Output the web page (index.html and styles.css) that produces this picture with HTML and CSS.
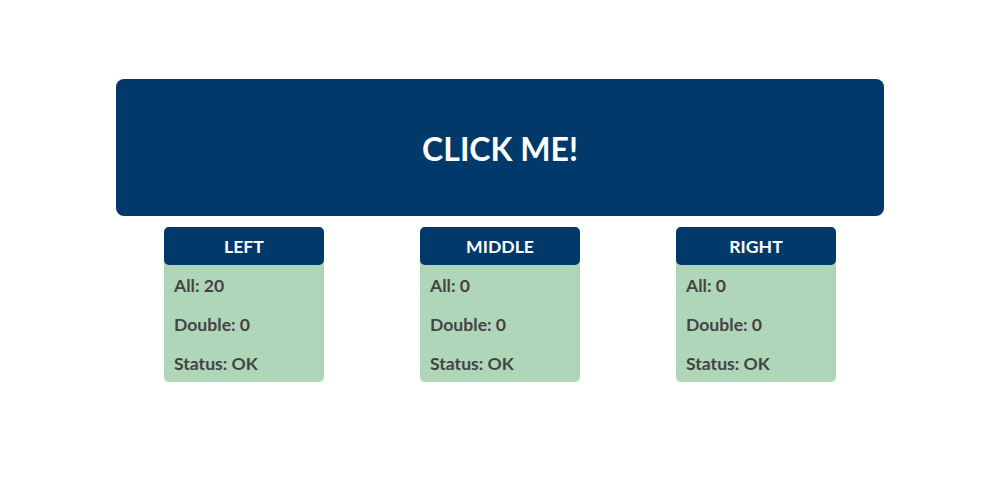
FILE: index.html
```html
<!DOCTYPE html>
<html lang="en">
<head>
    <meta charset="UTF-8">
    <title>Click Counter</title>
    <link rel="stylesheet" href="styles.css">
</head>
<body>
    <main class="wrap">
        <button class="big-btn" id="btn">CLICK ME!</button>

        <section class="panels">
            <div class="panel">
                <div class="panel-head">LEFT</div>
                <div class="panel-body">
                    <div class="row">All: 20</div>
                    <div class="row">Double: 0</div>
                    <div class="row">Status: OK</div>
                </div>
            </div>

            <div class="panel">
                <div class="panel-head">MIDDLE</div>
                <div class="panel-body">
                    <div class="row">All: 0</div>
                    <div class="row">Double: 0</div>
                    <div class="row">Status: OK</div>
                </div>
            </div>

            <div class="panel">
                <div class="panel-head">RIGHT</div>
                <div class="panel-body">
                    <div class="row">All: 0</div>
                    <div class="row">Double: 0</div>
                    <div class="row">Status: OK</div>
                </div>
            </div>
        </section>
    </main>
</body>
</html>
```

FILE: styles.css
```css
body {
    margin: 0;
    padding: 0;
    background: #fff;
    font-family: 'Lato', 'Liberation Sans', sans-serif;
    color: #444;
}

.wrap {
    width: 768px;
    padding: 79px 0 0 116px;
}

.big-btn {
    display: block;
    width: 768px;
    height: 137px;
    border: none;
    border-radius: 8px;
    background: #01396b;
    color: #fff;
    font-family: inherit;
    font-weight: 700;
    font-size: 32px;
    line-height: 1;
    padding: 2px 0 0;
    cursor: pointer;
}

.panels {
    display: grid;
    grid-template-columns: repeat(3, 256px);
    margin-top: 11px;
}

.panel {
    width: 160px;
    justify-self: center;
    background: #b0d6b9;
    border-radius: 5px;
}

.panel-head {
    height: 38px;
    line-height: 40px;
    text-align: center;
    background: #01396b;
    color: #fff;
    font-weight: 700;
    font-size: 17.6px;
    border-radius: 5px;
}

.row {
    height: 39px;
    line-height: 41px;
    padding-left: 10px;
    font-weight: 700;
    font-size: 17.6px;
}
```
